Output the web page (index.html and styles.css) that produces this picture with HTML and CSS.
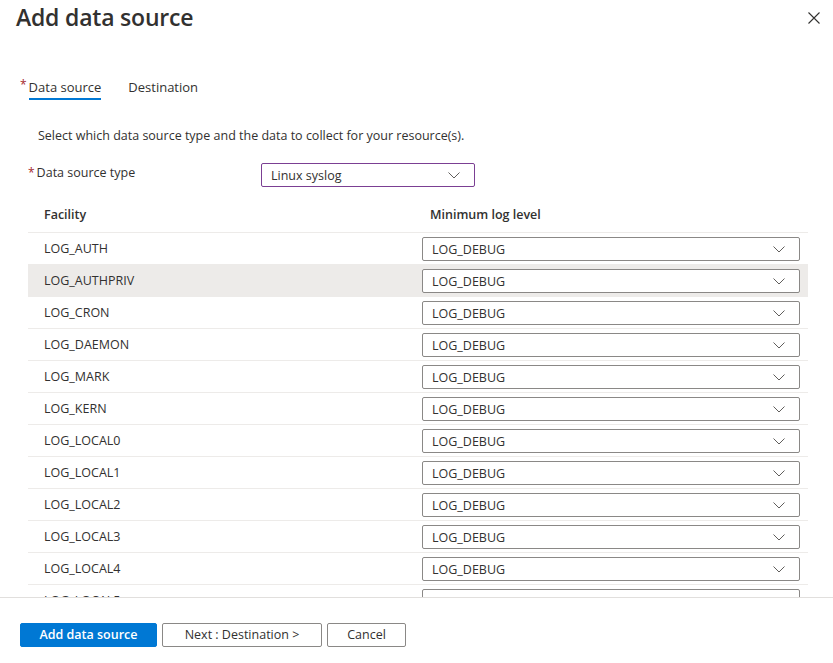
FILE: index.html
```html
<!DOCTYPE html>
<html>
<head>
<meta charset="utf-8">
<link rel="stylesheet" href="styles.css">
</head>
<body>
<div class="panel">
  <div class="header">
    <h1 class="title">Add data source</h1>
    <button class="close" aria-label="Close">
      <svg width="12" height="12" viewBox="0 0 12 12"><path d="M0.5 0.5 L11.5 11.5 M11.5 0.5 L0.5 11.5" stroke="#323130" stroke-width="1.1" fill="none"/></svg>
    </button>
  </div>
  <div class="content">
    <div class="tabs">
      <div class="tab active"><span class="req">*</span><span class="tab-label">Data source</span></div>
      <div class="tab"><span class="tab-label">Destination</span></div>
    </div>
    <p class="desc">Select which data source type and the data to collect for your resource(s).</p>
    <div class="field">
      <div class="field-label"><span class="req">*</span>Data source type</div>
      <div class="select select-type"><span>Linux syslog</span><svg class="chev" width="12" height="7" viewBox="0 0 12 7"><path d="M0.5 0.5 L6 6 L11.5 0.5" stroke="#605e5c" fill="none"/></svg></div>
    </div>
    <div class="table">
      <div class="thead">
        <div class="c1">Facility</div>
        <div class="c2">Minimum log level</div>
      </div>
      <div class="tbody" id="rows"></div>
    </div>
  </div>
  <div class="footer">
    <button class="btn primary">Add data source</button>
    <button class="btn">Next : Destination &gt;</button>
    <button class="btn">Cancel</button>
  </div>
</div>
<template id="rowtpl">
  <div class="row"><div class="c1 fac"></div><div class="c2"><div class="select"><span>LOG_DEBUG</span><svg class="chev" width="12" height="7" viewBox="0 0 12 7"><path d="M0.5 0.5 L6 6 L11.5 0.5" stroke="#605e5c" fill="none"/></svg></div></div></div>
</template>
<script>
  var names = ["LOG_AUTH","LOG_AUTHPRIV","LOG_CRON","LOG_DAEMON","LOG_MARK","LOG_KERN","LOG_LOCAL0","LOG_LOCAL1","LOG_LOCAL2","LOG_LOCAL3","LOG_LOCAL4","LOG_LOCAL5"];
  var tpl = document.getElementById('rowtpl');
  var body = document.getElementById('rows');
  names.forEach(function(n, i){
    var r = tpl.content.firstElementChild.cloneNode(true);
    r.querySelector('.fac').textContent = n;
    if (i === 1) r.classList.add('hover');
    body.appendChild(r);
  });
</script>
</body>
</html>
```
FILE: styles.css
```css
* { box-sizing: border-box; }
html, body { margin: 0; padding: 0; background: #fff; }
body {
  font-family: "Open Sans", "Noto Sans", sans-serif;
  font-size: 13px;
  color: #323130;
}
.panel {
  height: 663px;
  display: flex;
  flex-direction: column;
  overflow: hidden;
}
.header {
  display: flex;
  justify-content: space-between;
  align-items: flex-start;
  padding: 0 13px 0 16px;
}
.title {
  margin: 0;
  font-size: 23px;
  font-weight: 600;
  line-height: 34px;
  letter-spacing: -0.2px;
}
.close {
  border: 0;
  background: none;
  padding: 0;
  margin-top: 12px;
  width: 12px;
  height: 12px;
  display: flex;
}
.content {
  flex: 1;
  overflow: hidden;
  padding: 0 25px 0 28px;
}
.tabs {
  display: flex;
  gap: 27px;
  margin-top: 42px;
  margin-left: -8px;
}
.tab {
  display: flex;
  align-items: flex-start;
  height: 29px;
  line-height: 22px;
  font-size: 13px;
}
.tab .req { color: #a4262c; margin-right: 2px; font-size: 12px; line-height: 18px; }
.tab-label { display: block; height: 29px; line-height: 22px; }
.tab.active .tab-label { border-bottom: 2px solid #0078d4; height: 24px; }
.desc {
  margin: 0;
  margin-top: 21px;
  padding-left: 10px;
  line-height: 20px;
  font-size: 12.5px;
}
.req { color: #a4262c; }
.field {
  display: flex;
  margin-top: 17px;
  height: 24px;
}
.field-label {
  width: 233px;
  line-height: 20px;
  margin-top: 0;
  font-size: 12.5px;
}
.field-label .req { margin-right: 2px; font-size: 12px; }
.select {
  height: 24px;
  border: 1px solid #8a8886;
  border-radius: 2px;
  display: flex;
  align-items: center;
  justify-content: space-between;
  padding: 0 14px 0 9px;
  font-size: 12.5px;
  background: #fff;
}
.select-type {
  width: 214px;
  border-color: #7b3f93;
}
.chev { display: block; }
.table { margin-top: 13px; }
.thead {
  display: flex;
  height: 33px;
  border-bottom: 1px solid #edebe9;
  line-height: 30px;
  font-weight: 600;
  font-size: 12.5px;
}
.c1 { width: 394px; padding-left: 16px; }
.c2 { flex: 1; padding-left: 8px; padding-right: 8px; }
.row {
  display: flex;
  height: 32px;
  border-bottom: 1px solid #edebe9;
  align-items: flex-start;
}
.row.hover { background: #edebe9; }
.row .c1 { line-height: 32px; font-size: 12.5px; }
.row .c2 { padding-left: 0; padding-top: 4px; }
.footer {
  height: 66px;
  flex: none;
  border-top: 1px solid #e1dfdd;
  display: flex;
  align-items: flex-start;
  gap: 5px;
  padding: 25px 0 0 20px;
}
.btn {
  height: 24px;
  border: 1px solid #8a8886;
  border-radius: 2px;
  background: #fff;
  font-family: inherit;
  font-size: 12.5px;
  color: #323130;
  padding: 0;
  line-height: 20px;
  white-space: nowrap;
  text-align: center;
}
.btn.primary {
  background: #0078d4;
  border-color: #0078d4;
  color: #fff;
  font-weight: 600;
  width: 137px;
}
.btn:nth-child(2) { width: 160px; }
.btn:nth-child(3) { width: 79px; }
```
